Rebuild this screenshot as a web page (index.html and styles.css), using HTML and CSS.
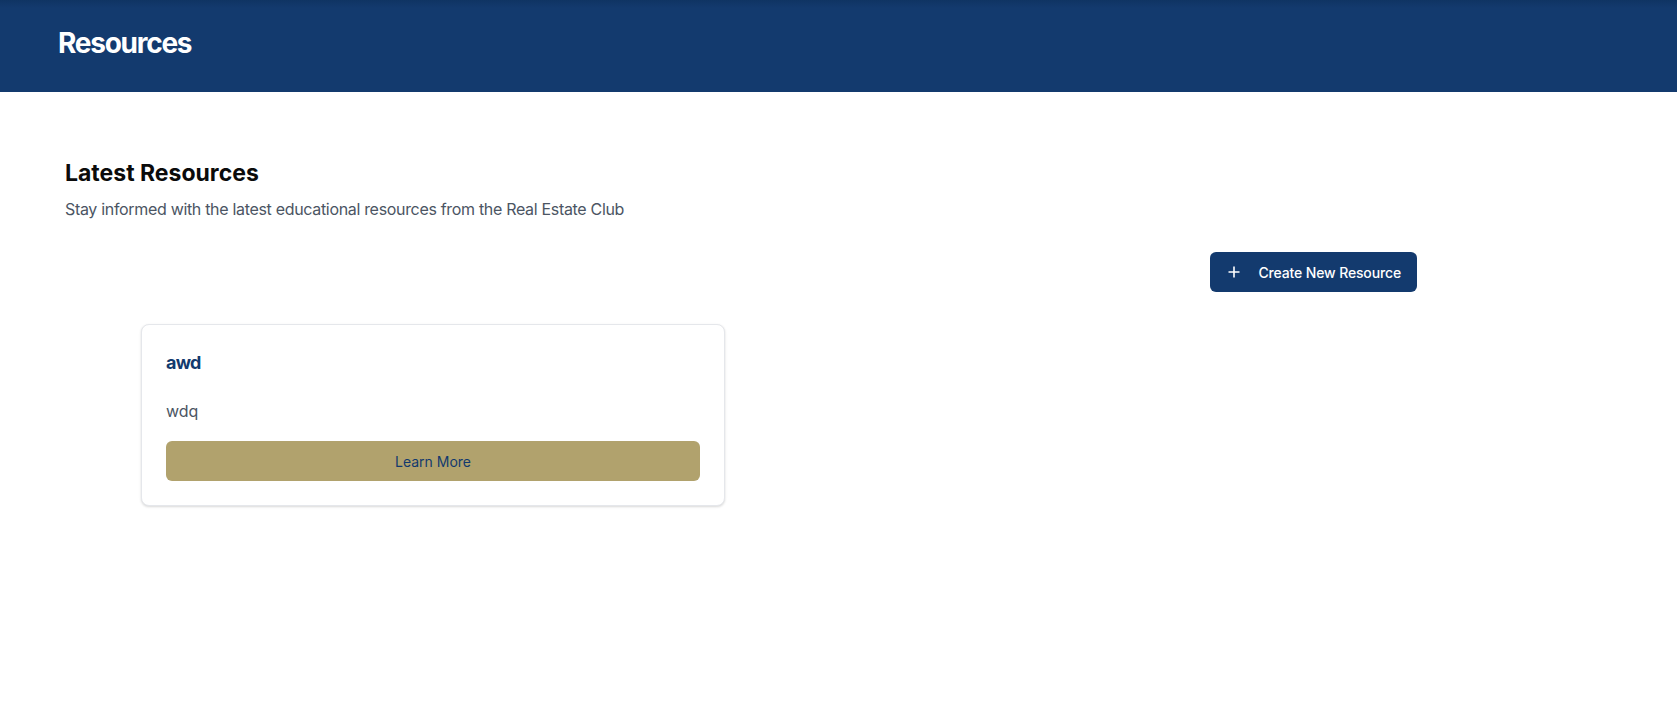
FILE: index.html
```html
<!DOCTYPE html>
<html lang="en">
<head>
<meta charset="utf-8">
<title>Resources</title>
<link rel="stylesheet" href="styles.css">
</head>
<body>
<header class="topbar">
  <h1 class="topbar-title">Resources</h1>
</header>
<main class="page">
  <section class="intro">
    <h2 class="intro-title">Latest Resources</h2>
    <p class="intro-text">Stay informed with the latest educational resources from the Real Estate Club</p>
  </section>
  <div class="toolbar">
    <button class="btn-create" type="button">
      <svg class="btn-icon" viewBox="0 0 12 12" width="12" height="12" aria-hidden="true"><path d="M6 0.5v11M0.5 6h11" stroke="currentColor" stroke-width="1.6" fill="none"/></svg>
      <span>Create New Resource</span>
    </button>
  </div>
  <div class="grid">
    <article class="card">
      <h3 class="card-title">awd</h3>
      <p class="card-text">wdq</p>
      <button class="btn-more" type="button">Learn More</button>
    </article>
  </div>
</main>
</body>
</html>
```
FILE: styles.css
```css
* { box-sizing: border-box; }
html, body { margin: 0; padding: 0; background: #ffffff; }
body {
  font-family: Inter, "Noto Sans", "Liberation Sans", sans-serif;
  color: #111827;
}
.topbar {
  height: 92px;
  background: linear-gradient(to bottom, #0f3463 0px, #133a6e 8px, #133a6e 100%);
  padding: 25px 58px 0;
}
.topbar-title {
  margin: 0;
  font-size: 28px;
  line-height: 36px;
  font-weight: 700;
  letter-spacing: -0.045em;
  color: #ffffff;
}
.page {
  padding: 67px 0 40px 65px;
  width: 1417px;
}
.intro-title {
  margin: 0 0 10px;
  font-size: 23px;
  line-height: 28px;
  font-weight: 700;
  color: #0b0b0b;
}
.intro-text {
  margin: 0;
  font-size: 16px;
  line-height: 24px;
  letter-spacing: -0.02em;
  color: #4b5563;
}
.toolbar {
  display: flex;
  justify-content: flex-end;
  margin-top: 31px;
}
.btn-create {
  display: flex;
  align-items: center;
  gap: 18px;
  height: 40px;
  padding: 0 16px 0 18px;
  border: 0;
  border-radius: 6px;
  background: #133a6e;
  color: #ffffff;
  font-family: inherit;
  font-size: 14px;
  font-weight: 500;
  letter-spacing: -0.01em;
}
.btn-icon { display: block; }
.grid {
  display: grid;
  grid-template-columns: 584px;
  margin: 32px 0 0 76px;
}
.card {
  border: 1px solid #e5e7eb;
  border-radius: 8px;
  padding: 24px;
  background: #ffffff;
  box-shadow: 0 1px 3px rgba(0,0,0,0.10), 0 1px 2px rgba(0,0,0,0.06);
}
.card-title {
  margin: 0 0 22px;
  font-size: 18px;
  line-height: 28px;
  font-weight: 700;
  letter-spacing: -0.04em;
  color: #133a6e;
}
.card-text {
  margin: 0 0 18px;
  font-size: 16px;
  line-height: 24px;
  color: #4b5563;
}
.btn-more {
  display: block;
  width: 100%;
  height: 40px;
  border: 0;
  border-radius: 6px;
  background: #b1a26d;
  color: #133a6e;
  font-family: inherit;
  font-size: 14px;
  font-weight: 400;
}
```
